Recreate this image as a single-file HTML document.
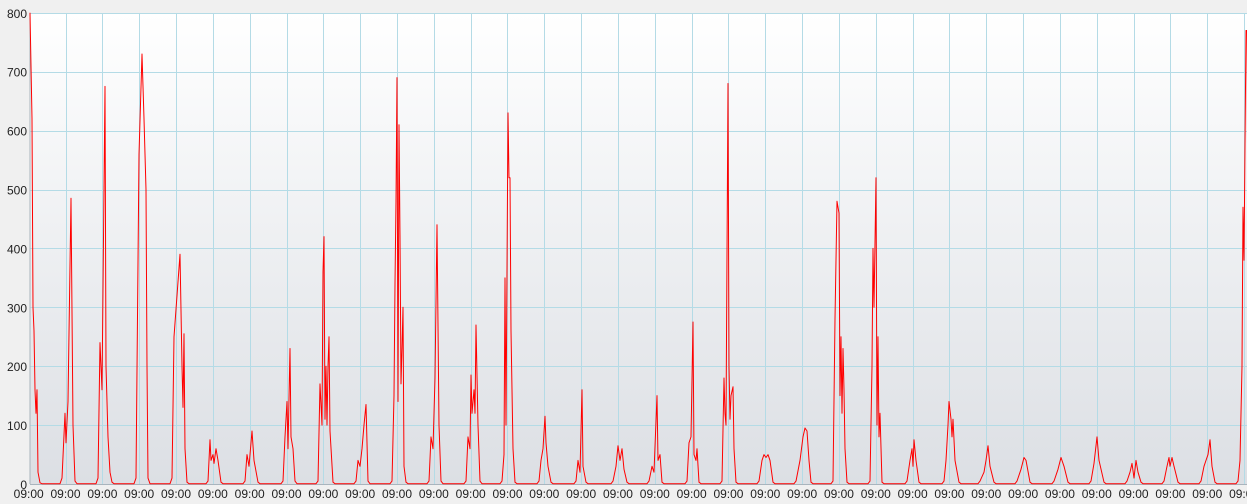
<!DOCTYPE html>
<html><head><meta charset="utf-8"><style>
html,body{margin:0;padding:0;background:#f0f0f0;width:1247px;height:504px;overflow:hidden;font-family:"Liberation Sans",sans-serif}
</style></head><body>
<svg id="s" width="1247" height="504" xmlns="http://www.w3.org/2000/svg" style="position:absolute;left:0;top:0">
<defs><linearGradient id="g" x1="0" y1="0" x2="0" y2="1"><stop offset="0" stop-color="#ffffff"/><stop offset="1" stop-color="#dcdfe4"/></linearGradient></defs>
<rect x="30" y="13" width="1217" height="471" fill="url(#g)"/>
<g id="grid" stroke="#b4dbe6" stroke-width="1"></g>
<line x1="30" y1="13" x2="30" y2="484" stroke="#a9b4bd"/>
<line x1="30" y1="484.5" x2="1247" y2="484.5" stroke="#a9b4bd"/>
<g id="lab" font-size="12" fill="#222" font-family="Liberation Sans, sans-serif"></g>
<path id="p" fill="none" stroke="#ff0000" stroke-width="1" stroke-linejoin="round"/>
</svg>
<script>
var ns="http://www.w3.org/2000/svg",grid=document.getElementById('grid'),lab=document.getElementById('lab');
function Y(v){return 484-v*0.589;}
for(var i=1;i<=8;i++){var y=Math.round(Y(i*100))+0.5;var l=document.createElementNS(ns,'line');l.setAttribute('x1',30);l.setAttribute('x2',1247);l.setAttribute('y1',y);l.setAttribute('y2',y);grid.appendChild(l);}
for(var i=0;i<=8;i++){var t=document.createElementNS(ns,'text');t.setAttribute('x',27);t.setAttribute('y',Y(i*100)+5);t.setAttribute('text-anchor','end');t.textContent=String(i*100);lab.appendChild(t);}
for(var k=0;k<34;k++){var x=28.7+36.83*k;if(k>0){var xx=Math.round(x)+0.5;var l=document.createElementNS(ns,'line');l.setAttribute('x1',xx);l.setAttribute('x2',xx);l.setAttribute('y1',13);l.setAttribute('y2',484);grid.appendChild(l);}
var t=document.createElementNS(ns,'text');t.setAttribute('x',x);t.setAttribute('y',498);t.setAttribute('text-anchor','middle');t.textContent='09:00';lab.appendChild(t);}
var peaks=[
[[30,800],[31,710],[32,620],[33,300],[34,260],[35,160],[36,120],[37,160],[38,20],[40,2]],
[[62,10],[65,120],[66,70],[68,140],[71,485],[73,100],[75,5]],
[[98,10],[100,240],[102,160],[105,675],[106,200],[108,80],[110,20],[112,3]],
[[136,10],[139,560],[142,730],[144,620],[146,500],[147,200],[148,10]],
[[172,10],[174,250],[180,390],[182,200],[183,130],[184,255],[185,60],[187,3]],
[[208,5],[210,75],[211,40],[213,50],[214,35],[216,60],[218,40],[221,3]],
[[245,5],[247,50],[249,30],[251,70],[252,90],[254,40],[258,3]],
[[283,5],[285,80],[287,140],[288,60],[290,230],[291,80],[293,60],[295,5]],
[[318,5],[320,170],[322,100],[323,360],[324,420],[325,110],[326,200],[327,100],[328,200],[329,250],[330,90],[333,3]],
[[356,5],[358,40],[360,30],[362,60],[364,100],[366,135],[368,5]],
[[392,5],[394,150],[395,340],[396,480],[397,690],[398,140],[399,610],[400,420],[401,170],[402,230],[403,300],[404,30],[406,3]],
[[429,5],[431,80],[433,60],[435,180],[437,440],[439,100],[441,5]],
[[466,5],[468,80],[470,60],[471,185],[472,120],[474,160],[475,120],[476,270],[478,100],[480,5]],
[[502,5],[504,50],[505,350],[506,100],[508,630],[509,520],[510,520],[511,260],[513,60],[515,3]],
[[539,5],[541,40],[543,60],[545,115],[546,70],[548,30],[551,3]],
[[576,5],[578,40],[580,20],[582,160],[583,30],[586,3]],
[[613,5],[616,30],[618,65],[620,40],[622,60],[624,25],[627,3]],
[[649,5],[652,30],[654,20],[657,150],[658,40],[660,50],[662,3]],
[[687,5],[689,70],[691,80],[693,275],[694,50],[696,40],[697,60],[699,3]],
[[722,5],[724,180],[725,120],[726,100],[728,680],[729,200],[730,110],[731,150],[733,165],[734,60],[736,3]],
[[759,5],[762,40],[764,50],[766,45],[768,50],[770,40],[773,3]],
[[796,5],[800,40],[803,80],[805,95],[807,90],[809,40],[811,3]],
[[833,5],[835,280],[837,480],[838,470],[839,460],[840,150],[841,250],[842,120],[843,230],[844,160],[845,60],[847,3]],
[[870,5],[872,200],[873,400],[874,300],[876,520],[877,100],[878,250],[879,80],[880,120],[882,3]],
[[907,5],[910,40],[912,60],[913,30],[914,75],[916,40],[919,3]],
[[944,5],[946,40],[948,100],[949,140],[951,110],[952,80],[953,110],[955,40],[959,3]],
[[980,5],[984,20],[986,40],[988,65],[990,30],[994,3]],
[[1017,5],[1021,25],[1024,45],[1026,40],[1030,3]],
[[1054,5],[1058,25],[1061,45],[1064,30],[1068,3]],
[[1091,5],[1094,35],[1097,80],[1099,40],[1104,3]],
[[1127,5],[1130,20],[1132,35],[1134,10],[1136,40],[1138,20],[1141,3]],
[[1164,5],[1167,30],[1169,45],[1170,30],[1172,45],[1174,30],[1178,3]],
[[1201,5],[1204,30],[1206,40],[1208,50],[1210,75],[1212,30],[1215,3]],
[[1238,5],[1240,40],[1242,200],[1243,470],[1244,380],[1246,770],[1247,770]]
];
var d='',prev=null;
peaks.forEach(function(pk,i){
 pk.forEach(function(pt,j){
  if(i===0&&j===0){d+='M'+pt[0]+' '+Y(pt[1]).toFixed(1);}
  else{
   if(j===0){d+=' L'+(pt[0]-2)+' '+Y(0.5)+' ';}
   d+=' L'+pt[0]+' '+Y(pt[1]).toFixed(1);
  }
 });
 d+=' L'+(pk[pk.length-1][0]+2)+' '+Y(0.5);
});
document.getElementById('p').setAttribute('d',d);
</script>
</body></html>
